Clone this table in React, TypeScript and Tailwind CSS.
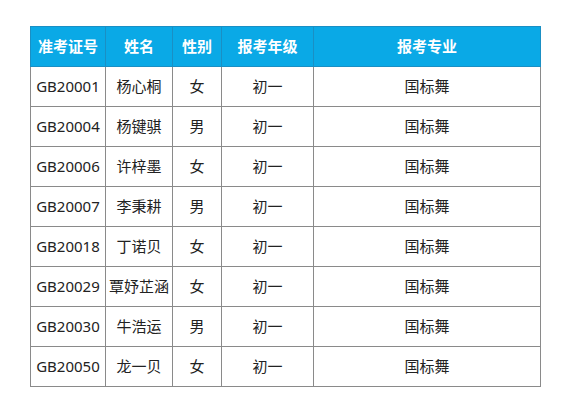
const rows = [
  ["GB20001", "杨心桐", "女"],
  ["GB20004", "杨键骐", "男"],
  ["GB20006", "许梓墨", "女"],
  ["GB20007", "李秉耕", "男"],
  ["GB20018", "丁诺贝", "女"],
  ["GB20029", "覃妤芷涵", "女"],
  ["GB20030", "牛浩运", "男"],
  ["GB20050", "龙一贝", "女"],
];

const headers = ["准考证号", "姓名", "性别", "报考年级", "报考专业"];
const widths = ["w-[75px]", "w-[67px]", "w-[49px]", "w-[92px]", "w-[227px]"];

export default function App() {
  return (
    <div
      className="w-[564px] h-[410px] bg-white pt-[26px] pl-[30px]"
      style={{ fontFamily: '"Noto Sans", "Noto Sans CJK SC", sans-serif' }}
    >
      <table className="w-[510px] border-collapse table-fixed text-[15px]">
        <thead>
          <tr className="h-[40px] bg-[#0aa9e6] text-white">
            {headers.map((h, i) => (
              <th
                key={h}
                className={`${widths[i]} font-bold text-center border border-[#1a8fc4] p-0`}
              >
                {h}
              </th>
            ))}
          </tr>
        </thead>
        <tbody className="text-[#222]">
          {rows.map(([id, name, sex]) => (
            <tr key={id} className="h-[40px]">
              <td className="border border-[#8a8a8a] text-center p-0 whitespace-nowrap">{id}</td>
              <td className="border border-[#8a8a8a] text-center p-0 whitespace-nowrap">{name}</td>
              <td className="border border-[#8a8a8a] text-center p-0">{sex}</td>
              <td className="border border-[#8a8a8a] text-center p-0">初一</td>
              <td className="border border-[#8a8a8a] text-center p-0">国标舞</td>
            </tr>
          ))}
        </tbody>
      </table>
    </div>
  );
}
